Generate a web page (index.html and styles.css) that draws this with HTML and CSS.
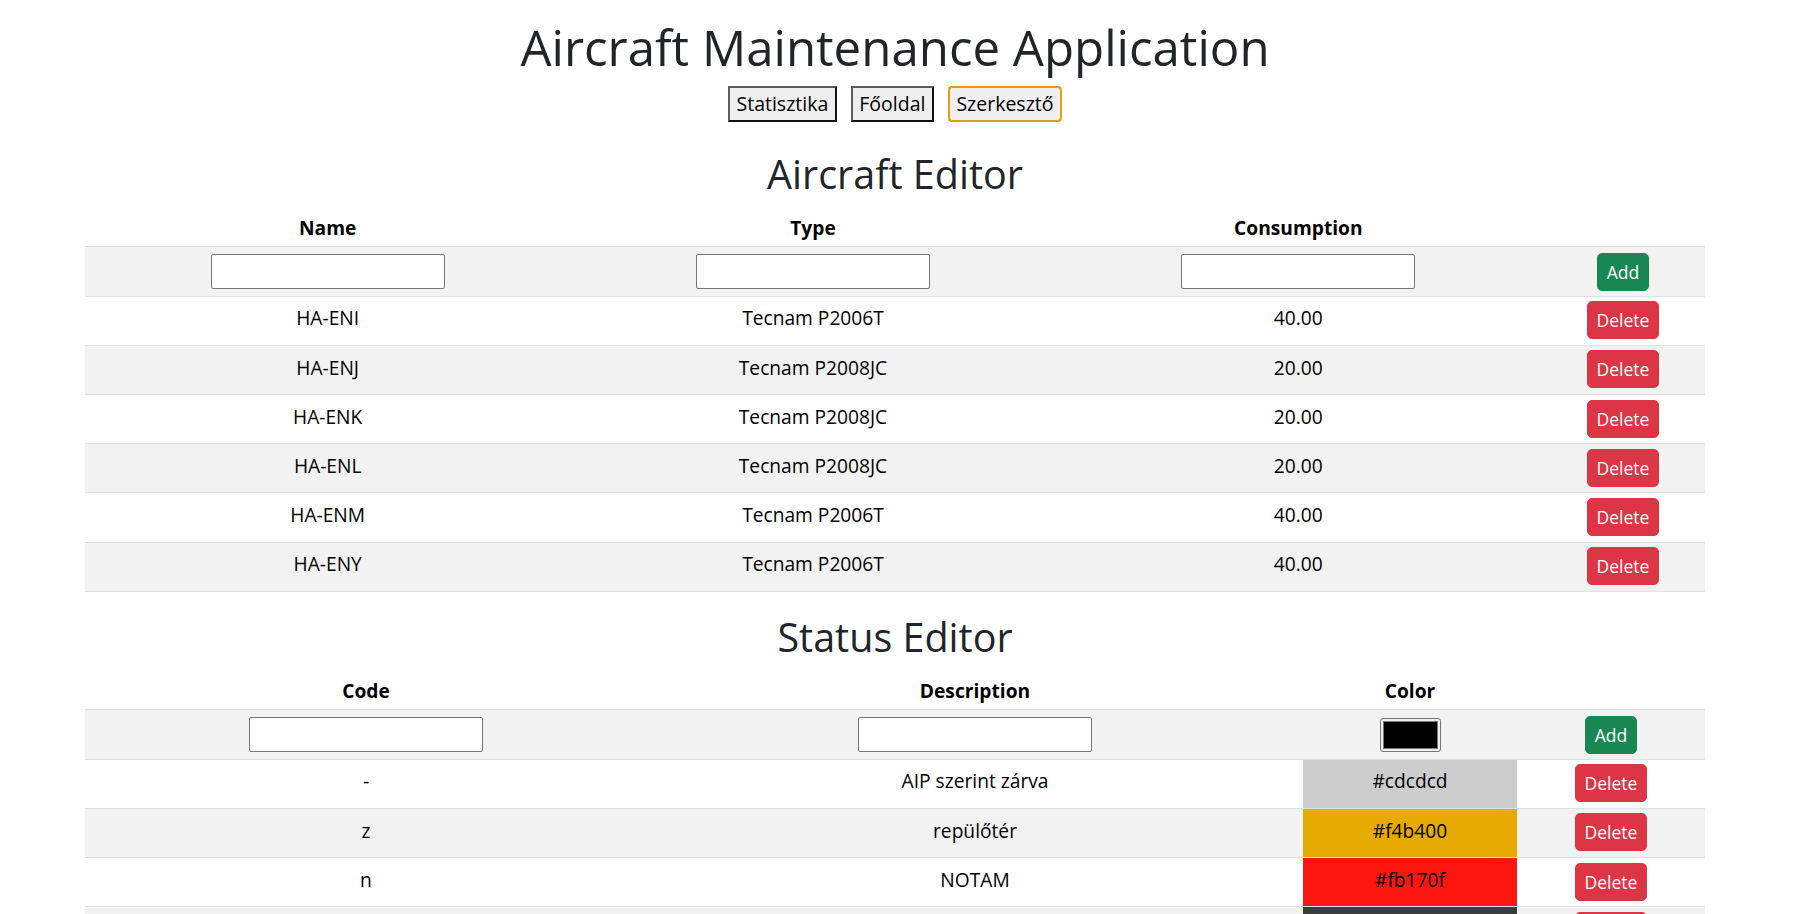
FILE: index.html
```html
<!DOCTYPE html>
<html lang="hu">
<head>
<meta charset="utf-8">
<title>Aircraft Maintenance Application</title>
<link rel="stylesheet" href="styles.css">
</head>
<body>
<div class="page">
  <header class="app-header">
    <h1 class="app-title">Aircraft Maintenance Application</h1>
    <nav class="nav">
      <button class="nav-btn" type="button">Statisztika</button>
      <button class="nav-btn" type="button">Főoldal</button>
      <button class="nav-btn is-active" type="button">Szerkesztő</button>
    </nav>
  </header>

  <section class="editor">
    <h2 class="editor-title">Aircraft Editor</h2>
    <table class="grid">
      <colgroup>
        <col class="col-aircraft">
        <col class="col-aircraft">
        <col class="col-aircraft">
        <col class="col-action-a">
      </colgroup>
      <thead>
        <tr><th>Name</th><th>Type</th><th>Consumption</th><th></th></tr>
      </thead>
      <tbody>
        <tr class="row-new">
          <td><input class="field" type="text"></td>
          <td><input class="field" type="text"></td>
          <td><input class="field" type="text"></td>
          <td><button class="btn btn-add" type="button">Add</button></td>
        </tr>
        <tr><td>HA-ENI</td><td>Tecnam P2006T</td><td>40.00</td><td class="cell-action"><button class="btn btn-delete" type="button">Delete</button></td></tr>
        <tr><td>HA-ENJ</td><td>Tecnam P2008JC</td><td>20.00</td><td class="cell-action"><button class="btn btn-delete" type="button">Delete</button></td></tr>
        <tr><td>HA-ENK</td><td>Tecnam P2008JC</td><td>20.00</td><td class="cell-action"><button class="btn btn-delete" type="button">Delete</button></td></tr>
        <tr><td>HA-ENL</td><td>Tecnam P2008JC</td><td>20.00</td><td class="cell-action"><button class="btn btn-delete" type="button">Delete</button></td></tr>
        <tr><td>HA-ENM</td><td>Tecnam P2006T</td><td>40.00</td><td class="cell-action"><button class="btn btn-delete" type="button">Delete</button></td></tr>
        <tr><td>HA-ENY</td><td>Tecnam P2006T</td><td>40.00</td><td class="cell-action"><button class="btn btn-delete" type="button">Delete</button></td></tr>
      </tbody>
    </table>
  </section>

  <section class="editor">
    <h2 class="editor-title">Status Editor</h2>
    <table class="grid">
      <colgroup>
        <col class="col-code">
        <col class="col-desc">
        <col class="col-color">
        <col class="col-action-s">
      </colgroup>
      <thead>
        <tr><th>Code</th><th>Description</th><th>Color</th><th></th></tr>
      </thead>
      <tbody>
        <tr class="row-new">
          <td><input class="field" type="text"></td>
          <td><input class="field" type="text"></td>
          <td><input class="color-field" type="color" value="#000000"></td>
          <td><button class="btn btn-add" type="button">Add</button></td>
        </tr>
        <tr><td>-</td><td>AIP szerint zárva</td><td class="swatch" style="background-color:#cdcdcd">#cdcdcd</td><td class="cell-action"><button class="btn btn-delete" type="button">Delete</button></td></tr>
        <tr><td>z</td><td>repülőtér</td><td class="swatch" style="background-color:#f4b400">#f4b400</td><td class="cell-action"><button class="btn btn-delete" type="button">Delete</button></td></tr>
        <tr><td>n</td><td>NOTAM</td><td class="swatch" style="background-color:#fb170f">#fb170f</td><td class="cell-action"><button class="btn btn-delete" type="button">Delete</button></td></tr>
        <tr><td>x</td><td>lezárva</td><td class="swatch" style="background-color:#404040">#404040</td><td class="cell-action"><button class="btn btn-delete" type="button">Delete</button></td></tr>
      </tbody>
    </table>
  </section>
</div>
</body>
</html>
```

FILE: styles.css
```css
* {
  box-sizing: border-box;
}

html {
  scrollbar-width: none;
}

body {
  margin: 0;
  background: #ffffff;
  color: #212529;
  font-family: "Open Sans", "Liberation Sans", sans-serif;
}

.page {
  width: 1790px;
  padding-top: 17px;
}

.app-header {
  display: flex;
  flex-direction: column;
  align-items: center;
}

.app-title {
  margin: 0 0 9px;
  font-size: 49.2px;
  font-weight: 500;
  line-height: 60px;
}

.nav {
  display: flex;
  gap: 14px;
  margin-bottom: 28px;
}

.nav-btn {
  font-family: inherit;
  font-size: 19.5px;
  line-height: 28.8px;
  padding: 1.5px 6.5px;
  color: #000000;
  background: #efefef;
  border: 2px solid;
  border-color: #5c5c5c #111111 #111111 #5c5c5c;
  border-radius: 0;
}

.nav-btn.is-active {
  border-color: #ea9c16;
  border-radius: 4px;
}

.editor {
  display: flex;
  flex-direction: column;
  align-items: center;
}

.editor-title {
  margin: 0;
  font-size: 39.5px;
  font-weight: 500;
  line-height: 48px;
}

.grid {
  width: 1620px;
  margin-bottom: 21px;
  border-collapse: collapse;
  table-layout: fixed;
  color: #000000;
  font-size: 19.2px;
  line-height: 28.8px;
}

.col-aircraft { width: 485.3px; }
.col-action-a { width: 164px; }
.col-code { width: 562px; }
.col-desc { width: 656px; }
.col-color { width: 214px; }
.col-action-s { width: 188px; }

.grid th,
.grid td {
  height: 49.2px;
  padding: 0 8px 4px;
  text-align: center;
  vertical-align: middle;
  border-bottom: 1px solid #dee2e6;
}

.grid th {
  padding: 12px 8px 0;
  font-weight: 700;
}

.grid .row-new td {
  padding: 0 8px;
}

.grid .cell-action {
  padding: 0 8px 1px;
}

.grid tbody tr:nth-child(odd) td {
  box-shadow: inset 0 0 0 9999px rgba(0, 0, 0, 0.05);
}

.field {
  display: block;
  width: 234px;
  height: 35px;
  margin: 0 auto;
  padding: 1px 4px;
  background: #ffffff;
  border: 1px solid #767676;
  border-radius: 2px;
  font: inherit;
}

.color-field {
  display: block;
  width: 61px;
  height: 34px;
  margin: 0 auto;
  padding: 0;
  background: #efefef;
  border: 1px solid #767676;
  border-radius: 3px;
  cursor: pointer;
}

.color-field::-webkit-color-swatch-wrapper {
  padding: 2px;
}

.color-field::-webkit-color-swatch {
  border: 1px solid #777777;
  border-radius: 0;
}

.btn {
  display: inline-block;
  font-family: inherit;
  font-size: 17.5px;
  line-height: 26px;
  padding: 5px 9px;
  color: #ffffff;
  border: 1px solid transparent;
  border-radius: 5px;
  vertical-align: middle;
}

.btn-add {
  background: #198754;
  border-color: #198754;
}

.btn-delete {
  background: #dc3545;
  border-color: #dc3545;
}
```
